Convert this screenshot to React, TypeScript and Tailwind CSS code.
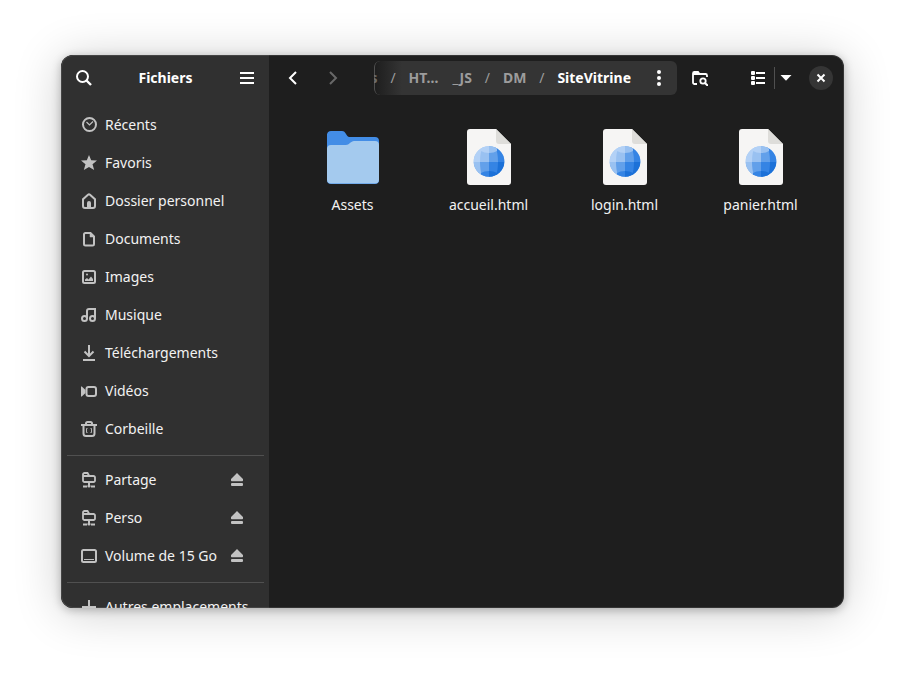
import type { ReactNode } from "react";

function Icon({ children }: { children: ReactNode }) {
  return (
    <svg
      viewBox="0 0 16 16"
      className="size-4 shrink-0"
      fill="none"
      stroke="currentColor"
      strokeWidth="2"
      aria-hidden="true"
    >
      {children}
    </svg>
  );
}

const icons: Record<string, ReactNode> = {
  recent: (
    <>
      <circle cx="8.500" cy="7.500" r="6.500" />
      <path d="M5.500 5l3 3 3.500-3.500" strokeWidth="1.200" />
    </>
  ),
  star: (
    <path
      d="M8 0l2.200 5.200 5.800.4-4.500 3.700 1.700 5.700L8 12l-5.200 3 1.700-5.700L0 5.600l5.800-.4z"
      fill="currentColor"
      stroke="none"
    />
  ),
  home: (
    <>
      <path d="M2 6.300v6.700a2 2 0 0 0 2 2h8a2 2 0 0 0 2-2V6.300L9 1.700a1.500 1.500 0 0 0-2 0z" />
      <path d="M6 15V10a2 2 0 0 1 4 0v5z" fill="currentColor" stroke="none" />
    </>
  ),
  document: (
    <>
      <path d="M5 2h4.500L13 5.500V13a1.500 1.500 0 0 1-1.500 1.500h-7A1.500 1.500 0 0 1 3 13V3.500A1.500 1.500 0 0 1 4.500 2z" />
      <path d="M9 1v5h5" fill="currentColor" strokeWidth="0.500" />
    </>
  ),
  image: (
    <>
      <rect x="2" y="2" width="12" height="12" rx="1.500" />
      <circle cx="6" cy="5.500" r="1" fill="currentColor" stroke="none" />
      <path d="M4 12V10.500L6 9l1.500 1.500L10 7.500l2 2.500v2z" fill="currentColor" stroke="none" />
    </>
  ),
  music: (
    <>
      <circle cx="3.500" cy="11.500" r="2.500" />
      <circle cx="11.500" cy="11.500" r="2.500" />
      <path d="M6 11.500V4a2 2 0 0 1 2-2h6v9.500" />
    </>
  ),
  download: <path d="M8 0v10M3.500 6.500L8 11l4.500-4.500M2 15h12" />,
  video: (
    <>
      <rect x="5.500" y="4" width="9.500" height="9" rx="2" />
      <path d="M0 3.500h.8L4.500 7v3L.8 13.500H0z" fill="currentColor" stroke="none" />
    </>
  ),
  trash: (
    <>
      <path d="M0 4h16M5 3.500V2.500A1.500 1.500 0 0 1 6.500 1h3A1.500 1.500 0 0 1 11 2.500v1M2.500 4v8.500A2.500 2.500 0 0 0 5 15h6a2.500 2.500 0 0 0 2.500-2.500V4" />
      <path d="M6.500 7.500h-1v4h1M9.500 7.500h1v4h-1" strokeWidth="0.900" />
    </>
  ),
  remote: (
    <>
      <path d="M2 4h10.500A1.500 1.500 0 0 1 14 5.500v3A1.500 1.500 0 0 1 12.500 10h-9A1.500 1.500 0 0 1 2 8.500zM2 4V2.500A1.500 1.500 0 0 1 3.500 1H6.500L8 3.500" strokeWidth="1.800" />
      <path d="M8 10v3M2 14.500h4M10 14.500h4" strokeWidth="2" />
      <circle cx="8" cy="14" r="1.600" fill="currentColor" stroke="none" />
    </>
  ),
  drive: (
    <>
      <rect x="1" y="2" width="14" height="12" rx="1.500" />
      <path d="M3 11.500h10" strokeWidth="1" />
    </>
  ),
  plus: <path d="M8 1v14M1 8h14" />,
};

function Place({ icon, label, eject }: { icon: string; label: string; eject?: boolean }) {
  return (
    <li className="flex h-[38px] items-center pl-3.5 pr-[19px]">
      <a href="#" className="flex min-w-0 flex-1 items-center gap-2 whitespace-nowrap">
        <span className="text-[#c2c2c2]">
          <Icon>{icons[icon]}</Icon>
        </span>
        {label}
      </a>
      {eject && (
        <button type="button" aria-label={`Éjecter ${label}`} className="text-[#c2c2c2]">
          <Icon>
            <path
              d="M8 1L14 7v1.500a.8.800 0 0 1-.8.800H2.800a.8.800 0 0 1-.8-.8V7zM3 11h10a1 1 0 0 1 1 1v1a1 1 0 0 1-1 1H3a1 1 0 0 1-1-1v-1a1 1 0 0 1 1-1z"
              fill="currentColor"
              stroke="none"
            />
          </Icon>
        </button>
      )}
    </li>
  );
}

function ToolButton({ label, dim, children }: { label: string; dim?: boolean; children: ReactNode }) {
  return (
    <button
      type="button"
      aria-label={label}
      disabled={dim}
      className={`flex size-[34px] shrink-0 items-center justify-center ${dim ? "text-[#686868]" : "text-white"}`}
    >
      <Icon>{children}</Icon>
    </button>
  );
}

function FolderPicture() {
  return (
    <svg viewBox="0 0 64 64" className="size-16" aria-hidden="true">
      <path d="M6 8.500A4 4 0 0 1 10 5h11c4 0 4 5 7 6h26a4 4 0 0 1 4 4v39a4 4 0 0 1-4 4H10a4 4 0 0 1-4-4z" fill="#438de6" />
      <path d="M6 23a4 4 0 0 1 4-4h15c3 0 5-4 8-4h21a4 4 0 0 1 4 4v34.500a4 4 0 0 1-4 4H10a4 4 0 0 1-4-4z" fill="#a4caee" />
    </svg>
  );
}

function HtmlPicture({ id }: { id: string }) {
  return (
    <svg viewBox="0 0 64 64" className="size-16" aria-hidden="true">
      <defs>
        <clipPath id={id}>
          <circle cx="32" cy="35.500" r="15.300" />
        </clipPath>
      </defs>
      <path d="M13 3h26l15 15v38a3 3 0 0 1-3 3H13a3 3 0 0 1-3-3V6a3 3 0 0 1 3-3z" fill="#f6f5f4" />
      <path d="M39 3l15 15H42a3 3 0 0 1-3-3z" fill="#deddda" />
      <g clipPath={`url(#${id})`}>
        <rect x="16" y="20" width="16" height="16" fill="#99c1f1" />
        <rect x="32" y="20" width="16" height="16" fill="#62a0ea" />
        <rect x="16" y="36" width="16" height="16" fill="#62a0ea" />
        <rect x="32" y="36" width="16" height="16" fill="#3584e4" />
        <path d="M16 20h10q-3 6-3 16h-7z" fill="#b3d1f6" />
        <path d="M16 36h7q0 10 3 16H16z" fill="#99c1f1" />
        <path d="M38 20q3 6 3 16h7V20z" fill="#3584e4" />
        <path d="M41 36q0 10-3 16h10V36z" fill="#1c71d8" />
        <path d="M24 20h8v7q-5 0-8-2z" fill="#b3d1f6" />
        <path d="M32 20h8v5q-3 2-8 2z" fill="#99c1f1" />
        <path d="M24 47q3-2 8-2v7h-8z" fill="#3584e4" />
        <path d="M32 45q5 0 8 2v5h-8z" fill="#1c71d8" />
      </g>
    </svg>
  );
}

function FileItem({ name, children }: { name: string; children: ReactNode }) {
  return (
    <li className="flex flex-col items-center gap-[5px] leading-5">
      {children}
      <span>{name}</span>
    </li>
  );
}

function Slash() {
  return <span className="w-[31px] shrink-0 text-center font-normal" aria-hidden="true">/</span>;
}

export default function App() {
  return (
    <div className="h-screen bg-white px-[61px] pb-[67px] pt-[55px] font-['Noto_Sans',sans-serif] text-sm text-[#f2f2f2]">
      <div className="relative flex h-full overflow-hidden rounded-xl bg-[#1e1e1e] shadow-[0_2px_10px_rgba(0,0,0,0.26),0_4px_48px_rgba(0,0,0,0.2)]">
        <aside className="flex w-[208px] shrink-0 flex-col overflow-hidden bg-[#303030] pl-1.5 pr-[5px]">
          <header className="flex h-[46px] shrink-0 items-center justify-between">
            <ToolButton label="Rechercher">
              <circle cx="6.500" cy="6.500" r="5.500" />
              <path d="M10.500 10.500l4.500 4.500" strokeWidth="2.400" />
            </ToolButton>
            <h1 className="font-bold text-white">Fichiers</h1>
            <ToolButton label="Menu principal">
              <path d="M1 3h14M1 8h14M1 13h14" />
            </ToolButton>
          </header>
          <nav className="mt-[5px]">
            <ul>
              <Place icon="recent" label="Récents" />
              <Place icon="star" label="Favoris" />
              <Place icon="home" label="Dossier personnel" />
              <Place icon="document" label="Documents" />
              <Place icon="image" label="Images" />
              <Place icon="music" label="Musique" />
              <Place icon="download" label="Téléchargements" />
              <Place icon="video" label="Vidéos" />
              <Place icon="trash" label="Corbeille" />
            </ul>
            <hr className="mb-[5px] mt-[7px] border-[#505050]" />
            <ul>
              <Place icon="remote" label="Partage" eject />
              <Place icon="remote" label="Perso" eject />
              <Place icon="drive" label="Volume de 15 Go" eject />
            </ul>
            <hr className="mb-[5px] mt-[7px] border-[#505050]" />
            <ul>
              <Place icon="plus" label="Autres emplacements" />
            </ul>
          </nav>
        </aside>
        <main className="min-w-0 flex-1">
          <header className="flex h-[46px] items-center pl-[7px] pr-[11px]">
            <ToolButton label="Précédent">
              <path d="M11 2L5 8l6 6" />
            </ToolButton>
            <div className="ml-1.5 mr-6">
              <ToolButton label="Suivant" dim>
                <path d="M5 2l6 6-6 6" />
              </ToolButton>
            </div>
            <div className="relative flex h-[34px] min-w-0 flex-1 items-center overflow-hidden rounded-md bg-[#343434]">
              <div className="pointer-events-none absolute inset-y-0 left-0 w-7 rounded-l-md border-l border-[#505050] bg-linear-to-r from-[#1e1e1e] to-transparent" />
              <nav className="relative flex min-w-0 flex-1 justify-end overflow-hidden whitespace-nowrap font-bold text-[#9c9c9c]">
                <a href="#" className="text-[#6c6c6c]">Documents</a>
                <Slash />
                <a href="#" className="flex gap-3.5">
                  <span>HT…</span>
                  <span>_JS</span>
                </a>
                <Slash />
                <a href="#">DM</a>
                <Slash />
                <a href="#" className="text-white">SiteVitrine</a>
              </nav>
              <div className="ml-3">
                <ToolButton label="Menu du dossier">
                  <g fill="currentColor" stroke="none">
                    <circle cx="7" cy="2" r="2" />
                    <circle cx="7" cy="8" r="2" />
                    <circle cx="7" cy="14" r="2" />
                  </g>
                </ToolButton>
              </div>
            </div>
            <div className="ml-1.5 mr-6">
              <ToolButton label="Rechercher dans le dossier">
                <path d="M5 14H2.500A1.500 1.500 0 0 1 1 12.500v-9A1.500 1.500 0 0 1 2.500 2H6l1.500 2h6A1.500 1.500 0 0 1 15 5.500V7M1 4h7" strokeWidth="1.800" />
                <circle cx="11" cy="11" r="2.700" strokeWidth="1.800" />
                <path d="M13 13l3 3" />
              </ToolButton>
            </div>
            <ToolButton label="Vue en liste">
              <path d="M6 3h9M6 8h9M6 13h9" />
              <g fill="currentColor" stroke="none">
                <rect x="1" y="1" width="4" height="4" rx="1" />
                <rect x="1" y="6" width="4" height="4" rx="1" />
                <rect x="1" y="11" width="4" height="4" rx="1" />
              </g>
            </ToolButton>
            <button
              type="button"
              aria-label="Options d’affichage"
              className="-ml-px mr-3 flex h-[22px] w-[23px] shrink-0 items-center justify-center border-l border-[#505050] text-white"
            >
              <Icon>
                <path d="M2.500 5h11L8 10.800z" fill="currentColor" stroke="none" />
              </Icon>
            </button>
            <button
              type="button"
              aria-label="Fermer"
              className="flex size-6 shrink-0 items-center justify-center rounded-full bg-[#353535] text-white"
            >
              <Icon>
                <path d="M4.500 4.500l7 7M11.500 4.500l-7 7" />
              </Icon>
            </button>
          </header>
          <ul className="grid grid-cols-[repeat(auto-fill,136px)] justify-center pt-[25px]">
            <FileItem name="Assets">
              <FolderPicture />
            </FileItem>
            <FileItem name="accueil.html">
              <HtmlPicture id="globe-accueil" />
            </FileItem>
            <FileItem name="login.html">
              <HtmlPicture id="globe-login" />
            </FileItem>
            <FileItem name="panier.html">
              <HtmlPicture id="globe-panier" />
            </FileItem>
          </ul>
        </main>
        <div className="pointer-events-none absolute inset-0 rounded-xl border border-white/10" />
      </div>
    </div>
  );
}
